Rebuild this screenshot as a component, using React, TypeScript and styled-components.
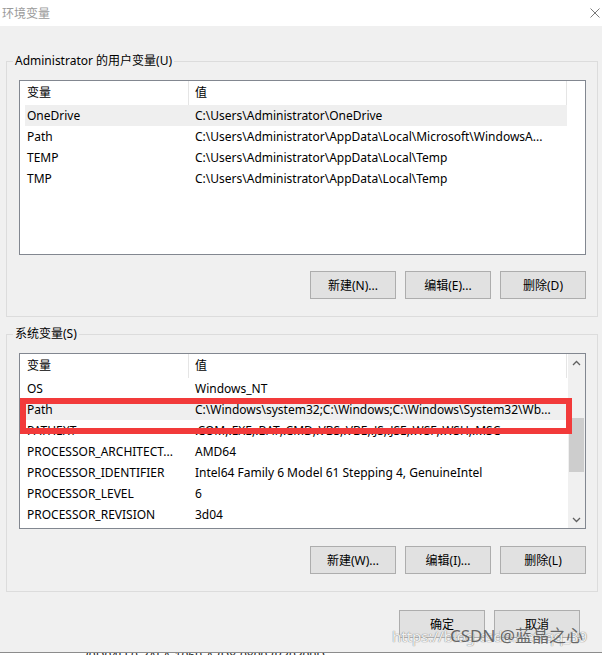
import React from 'react';
import styled, { createGlobalStyle } from 'styled-components';

/* --------------------------------- styles --------------------------------- */

const GlobalStyle = createGlobalStyle`
  html,
  body {
    margin: 0;
    padding: 0;
    background-color: #ffffff;
  }

  body {
    font-family: 'Noto Sans', 'Noto Sans CJK SC', sans-serif;
    font-size: 12px;
    color: #000000;
  }
`;

const DialogWindow = styled.div`
  position: relative;
  width: 602px;
  height: 653px;
  box-sizing: border-box;
  background-color: #f0f0f0;
  border-bottom: 1px solid #8c8c8c;
  display: flex;
  flex-direction: column;
  overflow: hidden;
`;

const TitleBar = styled.div`
  flex: 0 0 26px;
  background-color: #ffffff;
  display: flex;
  align-items: center;
  justify-content: space-between;
  padding: 0 2px;
  color: #9a9a9a;
`;

const GroupBox = styled.fieldset<{ $top: number }>`
  margin: ${(p) => p.$top}px 4px 0 6px;
  padding: 0 11px 17px 6px;
  border: 1px solid #dcdcdc;
  min-width: 0;
`;

const GroupLabel = styled.legend`
  padding: 0 2px;
  line-height: 16px;
`;

const ListFrame = styled.div<{ $height: number }>`
  position: relative;
  margin: 11px 0 0 6px;
  height: ${(p) => p.$height}px;
  box-sizing: border-box;
  border: 1px solid #828790;
  background-color: #ffffff;
  display: flex;
`;

const ListBody = styled.div`
  flex: 1;
  display: flex;
  flex-direction: column;
  overflow: hidden;
`;

const HeaderRow = styled.div`
  display: flex;
  width: 547px;
  flex: 0 0 24px;
  line-height: 24px;
`;

const HeaderCell = styled.div<{ $width?: number; $pad: number }>`
  box-sizing: border-box;
  flex: ${(p) => (p.$width ? `0 0 ${p.$width}px` : '1')};
  padding-left: ${(p) => p.$pad}px;
  border-right: 1px solid #e5e5e5;
`;

const Row = styled.div<{ $selected: boolean }>`
  display: flex;
  margin-left: 5px;
  width: 542px;
  flex: 0 0 21px;
  line-height: 21px;
  background-color: ${(p) => (p.$selected ? '#efefef' : 'transparent')};
`;

const NameCell = styled.div`
  flex: 0 0 164px;
  box-sizing: border-box;
  padding-left: 2px;
  white-space: nowrap;
  overflow: hidden;
`;

const ValueCell = styled.div`
  flex: 1;
  padding-left: 6px;
  white-space: nowrap;
  overflow: hidden;
`;

const ScrollTrack = styled.div`
  flex: 0 0 17px;
  background-color: #f0f0f0;
  display: flex;
  flex-direction: column;
  align-items: center;
`;

const ScrollArrow = styled.div<{ $bottom?: boolean }>`
  flex: 0 0 17px;
  width: 17px;
  display: flex;
  align-items: center;
  justify-content: center;
  margin-top: ${(p) => (p.$bottom ? 'auto' : '0')};
`;

const ScrollThumb = styled.div`
  width: 15px;
  height: 54px;
  margin-top: 47px;
  background-color: #cdcdcd;
`;

// red box somebody drew over the screenshot
const Highlight = styled.div`
  position: absolute;
  left: 0;
  top: 44px;
  width: 552px;
  height: 36px;
  box-sizing: border-box;
  border: 6px solid #f23a3a;
  pointer-events: none;
`;

const ButtonRow = styled.div<{ $top: number; $right?: number }>`
  display: flex;
  justify-content: flex-end;
  gap: 9px;
  margin-top: ${(p) => p.$top}px;
  padding-right: ${(p) => p.$right ?? 0}px;
`;

const DialogButton = styled.button`
  width: 86px;
  height: 28px;
  box-sizing: border-box;
  padding: 0;
  border: 1px solid #adadad;
  background-color: #e1e1e1;
  font: inherit;
  color: #000000;
`;

const Watermark = styled.div`
  position: absolute;
  left: 392px;
  top: 626px;
  font-size: 15px;
  line-height: 20px;
  white-space: nowrap;
`;

const WatermarkUrl = styled.span`
  color: rgba(255, 255, 255, 0.9);
  text-shadow: 0 0 1px #8a8a8a, 0 0 1px #8a8a8a;
`;

const WatermarkName = styled.span`
  position: absolute;
  left: 58px;
  top: 0;
  color: rgba(80, 80, 80, 0.85);
  text-shadow: none;
  font-size: 17px;
`;

const BehindStrip = styled.div`
  height: 2px;
  padding-left: 75px;
  overflow: hidden;
  font-size: 12px;
  line-height: 6px;
  color: #222222;
  white-space: nowrap;
`;

/* ---------------------------------- types --------------------------------- */

type Variable = {
  name: string;
  value: string;
};

type VariableListProps = {
  rows: Variable[];
  selected: number;
  height: number;
  scroll?: boolean;
  marked?: boolean;
};

/* ---------------------------------- data ---------------------------------- */

const userVariables: Variable[] = [
  { name: 'OneDrive', value: 'C:\\Users\\Administrator\\OneDrive' },
  { name: 'Path', value: 'C:\\Users\\Administrator\\AppData\\Local\\Microsoft\\WindowsA...' },
  { name: 'TEMP', value: 'C:\\Users\\Administrator\\AppData\\Local\\Temp' },
  { name: 'TMP', value: 'C:\\Users\\Administrator\\AppData\\Local\\Temp' },
];

const systemVariables: Variable[] = [
  { name: 'OS', value: 'Windows_NT' },
  { name: 'Path', value: 'C:\\Windows\\system32;C:\\Windows;C:\\Windows\\System32\\Wb...' },
  { name: 'PATHEXT', value: '.COM;.EXE;.BAT;.CMD;.VBS;.VBE;.JS;.JSE;.WSF;.WSH;.MSC' },
  { name: 'PROCESSOR_ARCHITECT...', value: 'AMD64' },
  { name: 'PROCESSOR_IDENTIFIER', value: 'Intel64 Family 6 Model 61 Stepping 4, GenuineIntel' },
  { name: 'PROCESSOR_LEVEL', value: '6' },
  { name: 'PROCESSOR_REVISION', value: '3d04' },
];

/* -------------------------------- component ------------------------------- */

const Chevron = ({ down }: { down?: boolean }): JSX.Element => (
  <svg width="9" height="6" viewBox="0 0 9 6">
    <polyline
      points={down ? '1,1 4.5,4.5 8,1' : '1,5 4.5,1.5 8,5'}
      fill="none"
      stroke="#606060"
      strokeWidth="1.3"
    />
  </svg>
);

const VariableList = ({ rows, selected, height, scroll, marked }: VariableListProps): JSX.Element => (
  <ListFrame $height={height}>
    <ListBody>
      <HeaderRow>
        <HeaderCell $width={169} $pad={7}>
          变量
        </HeaderCell>
        <HeaderCell $pad={6}>值</HeaderCell>
      </HeaderRow>
      {rows.map((row, i) => (
        <Row key={row.name} $selected={i === selected}>
          <NameCell>{row.name}</NameCell>
          <ValueCell>{row.value}</ValueCell>
        </Row>
      ))}
    </ListBody>
    {scroll && (
      <ScrollTrack>
        <ScrollArrow>
          <Chevron />
        </ScrollArrow>
        <ScrollThumb />
        <ScrollArrow $bottom>
          <Chevron down />
        </ScrollArrow>
      </ScrollTrack>
    )}
    {marked && <Highlight />}
  </ListFrame>
);

const App = (): JSX.Element => {
  return (
    <>
      <GlobalStyle />
      <DialogWindow>
        <TitleBar>
          <span>环境变量</span>
          <svg width="10" height="10" viewBox="0 0 10 10">
            <path d="M0.5 0.5 L9.5 9.5 M9.5 0.5 L0.5 9.5" stroke="#7a7a7a" strokeWidth="1" />
          </svg>
        </TitleBar>

        <GroupBox $top={27}>
          <GroupLabel>Administrator 的用户变量(U)</GroupLabel>
          <VariableList rows={userVariables} selected={0} height={175} />
          <ButtonRow $top={16}>
            <DialogButton>新建(N)...</DialogButton>
            <DialogButton>编辑(E)...</DialogButton>
            <DialogButton>删除(D)</DialogButton>
          </ButtonRow>
        </GroupBox>

        <GroupBox $top={9}>
          <GroupLabel>系统变量(S)</GroupLabel>
          <VariableList rows={systemVariables} selected={1} height={176} scroll marked />
          <ButtonRow $top={17}>
            <DialogButton>新建(W)...</DialogButton>
            <DialogButton>编辑(I)...</DialogButton>
            <DialogButton>删除(L)</DialogButton>
          </ButtonRow>
        </GroupBox>

        <ButtonRow $top={18} $right={22}>
          <DialogButton>确定</DialogButton>
          <DialogButton>取消</DialogButton>
        </ButtonRow>

        <Watermark>
          <WatermarkUrl>https://blog.csdn.net/qq_39</WatermarkUrl>
          <WatermarkName>CSDN @蓝晶之心</WatermarkName>
        </Watermark>
      </DialogWindow>
      <BehindStrip>- 20D04FE0-3AEA-1069-A2D8-08002B30309D</BehindStrip>
    </>
  );
};

export default App;
